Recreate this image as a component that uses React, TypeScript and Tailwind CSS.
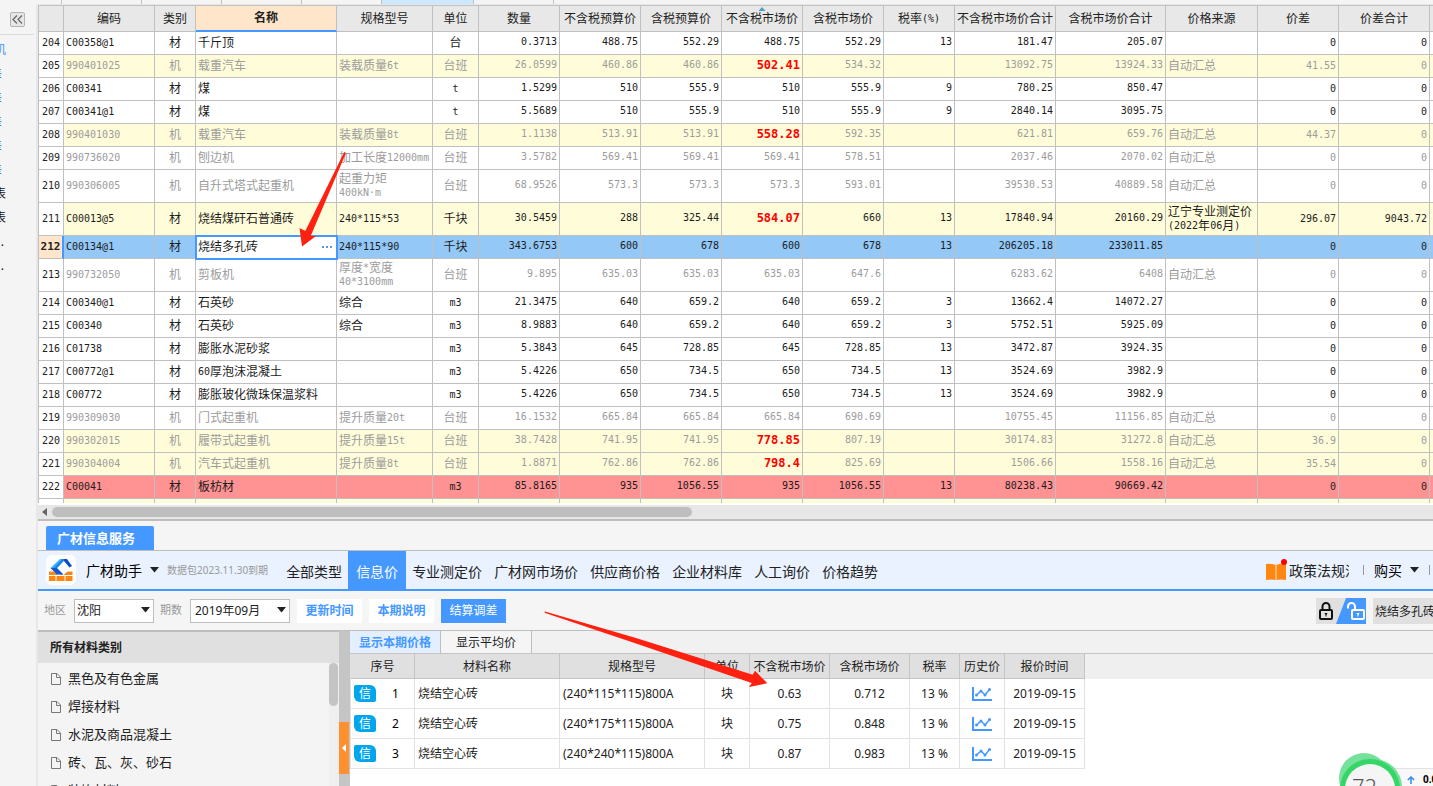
import { useState } from 'react'
import clsx from 'clsx'

interface Material {
    no: number;
    code: string;
    kind: string;
    name: string;
    spec: string;
    unit: string;
    values: string[]; // qty, budget, budget+tax, market, market+tax, rate, total, total+tax
    source: string;
    diff: string;
    diffTotal: string;
}

const row = (no: number, code: string, kind: string, name: string, spec: string, unit: string, values: string, source = '', diff = '0', diffTotal = '0'): Material => ({
    no, code, kind, name, spec, unit, values: values.split('|'), source, diff, diffTotal,
});

const MATERIALS: Material[] = [
    row(204, 'C00358@1', '材', '千斤顶', '', '台', '0.3713|488.75|552.29|488.75|552.29|13|181.47|205.07'),
    row(205, '990401025', '机', '载重汽车', '装载质量6t', '台班', '26.0599|460.86|460.86|502.41|534.32||13092.75|13924.33', '自动汇总', '41.55'),
    row(206, 'C00341', '材', '煤', '', 't', '1.5299|510|555.9|510|555.9|9|780.25|850.47'),
    row(207, 'C00341@1', '材', '煤', '', 't', '5.5689|510|555.9|510|555.9|9|2840.14|3095.75'),
    row(208, '990401030', '机', '载重汽车', '装载质量8t', '台班', '1.1138|513.91|513.91|558.28|592.35||621.81|659.76', '自动汇总', '44.37'),
    row(209, '990736020', '机', '刨边机', '加工长度12000mm', '台班', '3.5782|569.41|569.41|569.41|578.51||2037.46|2070.02', '自动汇总'),
    row(210, '990306005', '机', '自升式塔式起重机', '起重力矩\n400kN·m', '台班', '68.9526|573.3|573.3|573.3|593.01||39530.53|40889.58', '自动汇总'),
    row(211, 'C00013@5', '材', '烧结煤矸石普通砖', '240*115*53', '千块', '30.5459|288|325.44|584.07|660|13|17840.94|20160.29', '辽宁专业测定价\n(2022年06月)', '296.07', '9043.72'),
    row(212, 'C00134@1', '材', '烧结多孔砖', '240*115*90', '千块', '343.6753|600|678|600|678|13|206205.18|233011.85'),
    row(213, '990732050', '机', '剪板机', '厚度*宽度\n40*3100mm', '台班', '9.895|635.03|635.03|635.03|647.6||6283.62|6408', '自动汇总'),
    row(214, 'C00340@1', '材', '石英砂', '综合', 'm3', '21.3475|640|659.2|640|659.2|3|13662.4|14072.27'),
    row(215, 'C00340', '材', '石英砂', '综合', 'm3', '8.9883|640|659.2|640|659.2|3|5752.51|5925.09'),
    row(216, 'C01738', '材', '膨胀水泥砂浆', '', 'm3', '5.3843|645|728.85|645|728.85|13|3472.87|3924.35'),
    row(217, 'C00772@1', '材', '60厚泡沫混凝土', '', 'm3', '5.4226|650|734.5|650|734.5|13|3524.69|3982.9'),
    row(218, 'C00772', '材', '膨胀玻化微珠保温浆料', '', 'm3', '5.4226|650|734.5|650|734.5|13|3524.69|3982.9'),
    row(219, '990309030', '机', '门式起重机', '提升质量20t', '台班', '16.1532|665.84|665.84|665.84|690.69||10755.45|11156.85', '自动汇总'),
    row(220, '990302015', '机', '履带式起重机', '提升质量15t', '台班', '38.7428|741.95|741.95|778.85|807.19||30174.83|31272.8', '自动汇总', '36.9'),
    row(221, '990304004', '机', '汽车式起重机', '提升质量8t', '台班', '1.8871|762.86|762.86|798.4|825.69||1506.66|1558.16', '自动汇总', '35.54'),
    row(222, 'C00041', '材', '板枋材', '', 'm3', '85.8165|935|1056.55|935|1056.55|13|80238.43|90669.42'),
]

const COLUMNS = [
    { title: '', width: 'w-[26px]' },
    { title: '编码', width: 'w-[91px]' },
    { title: '类别', width: 'w-[41px]' },
    { title: '名称', width: 'w-[141px]' },
    { title: '规格型号', width: 'w-[96px]' },
    { title: '单位', width: 'w-[46px]' },
    { title: '数量', width: 'w-[81px]' },
    { title: '不含税预算价', width: 'w-[81px]' },
    { title: '含税预算价', width: 'w-[81px]' },
    { title: '不含税市场价', width: 'w-[81px]' },
    { title: '含税市场价', width: 'w-[81px]' },
    { title: '税率(%)', width: 'w-[71px]' },
    { title: '不含税市场价合计', width: 'w-[101px]' },
    { title: '含税市场价合计', width: 'w-[110px]' },
    { title: '价格来源', width: 'w-[92px]' },
    { title: '价差', width: 'w-[81px]' },
    { title: '价差合计', width: 'w-[91px]' },
]

const NAV = ['全部类型', '信息价', '专业测定价', '广材网市场价', '供应商价格', '企业材料库', '人工询价', '价格趋势']
const CATEGORIES = ['黑色及有色金属', '焊接材料', '水泥及商品混凝土', '砖、瓦、灰、砂石', '装饰材料']

const PRICE_COLUMNS = [
    { title: '序号', width: 'w-[64px]' },
    { title: '材料名称', width: 'w-[145px]' },
    { title: '规格型号', width: 'w-[145px]' },
    { title: '单位', width: 'w-[45px]' },
    { title: '不含税市场价', width: 'w-[80px]' },
    { title: '含税市场价', width: 'w-[80px]' },
    { title: '税率', width: 'w-[50px]' },
    { title: '历史价', width: 'w-[45px]' },
    { title: '报价时间', width: 'w-[80px]' },
]

const PRICES = [
    { spec: '(240*115*115)800A', price: '0.63', taxed: '0.712' },
    { spec: '(240*175*115)800A', price: '0.75', taxed: '0.848' },
    { spec: '(240*240*115)800A', price: '0.87', taxed: '0.983' },
]

// Half-width characters are set in a smaller mono face so that two of them fill one full-width cell
function Mixed({ text }: { text: string }) {
    return (
        <>
            {text.split(/([\x20-\x7e·]+)/).map((part, i) =>
                i % 2 === 1 ? <span key={i} className="align-[1px] font-['DejaVu_Sans_Mono','Noto_Sans_CJK_SC',monospace] text-[10px] leading-none">{part}</span> : part
            )}
        </>
    )
}

function Caret() {
    return (
        <svg width="9" height="6" viewBox="0 0 9 6" className="shrink-0 pointer-events-none">
            <path d="M0 0h9L4.5 5.5z" fill="#222" />
        </svg>
    )
}

function MaterialRow({ item }: { item: Material }) {
    const [name, setName] = useState(item.name)
    const selected = item.no === 212
    const changed = item.diff !== '0'
    const cell = 'border-r border-b border-[#c0c0c0] px-0.5'

    return (
        <tr
            className={clsx(
                item.spec.includes('\n') || item.source.includes('\n') ? 'h-[33px]' : 'h-[23px]',
                item.kind === '机' ? 'text-[#9c9c9c]' : 'text-[#1c1c1c]',
                changed && 'bg-[#fffcd9]',
                selected && 'bg-[#93c8f7]',
                item.no === 222 && 'bg-[#ff9393]',
            )}
        >
            <th
                scope="row"
                className={clsx(
                    "border-b border-l border-[#c0c0c0] p-0 text-center font-['DejaVu_Sans_Mono',monospace] text-[#222]",
                    selected ? 'border-r-2 border-r-[#4498ff] bg-[#ffe6ca] text-[11px] font-bold' : 'border-r bg-white text-[10px] font-normal',
                )}
            >
                {item.no}
            </th>
            <td className={clsx(cell, 'py-0')}><Mixed text={item.code} /></td>
            <td className={clsx(cell, 'py-0 text-center')}>{item.kind}</td>
            {selected ? (
                <td className="relative z-10 border-r border-b border-[#4498ff] bg-white px-0.5 py-0 outline-2 -outline-offset-1 outline-[#4498ff]">
                    <div className="flex items-center">
                        <input aria-label="名称" value={name} onChange={(e) => setName(e.target.value)} className="min-w-0 flex-1 bg-transparent outline-none" />
                        <button aria-label="选择材料" className="mr-0.5 flex gap-0.5">
                            <i className="size-0.5 bg-[#5b9bd5]" />
                            <i className="size-0.5 bg-[#5b9bd5]" />
                            <i className="size-0.5 bg-[#5b9bd5]" />
                        </button>
                    </div>
                </td>
            ) : (
                <td className={clsx(cell, 'py-0')}><Mixed text={item.name} /></td>
            )}
            <td className={clsx(cell, 'py-0 whitespace-pre')}><Mixed text={item.spec} /></td>
            <td className={clsx(cell, 'py-0 text-center')}><Mixed text={item.unit} /></td>
            {item.values.map((value, i) => (
                <td
                    key={i}
                    className={clsx(
                        cell,
                        "pt-0 pb-0.5 text-right font-['DejaVu_Sans_Mono',monospace]",
                        changed && i === 3 ? 'text-[12px] font-bold text-[#ff0000]' : 'text-[10px]',
                    )}
                >
                    {value}
                </td>
            ))}
            <td className={clsx(cell, 'py-0 whitespace-pre')}><Mixed text={item.source} /></td>
            <td className={clsx(cell, 'py-0 text-right')}><Mixed text={item.diff} /></td>
            <td className={clsx(cell, 'py-0 text-right')}><Mixed text={item.diffTotal} /></td>
            <td className="border-b border-[#c0c0c0] p-0" />
        </tr>
    )
}

function MaterialTable() {
    return (
        <div className="overflow-hidden bg-white pb-0.5">
            <table className="w-full table-fixed border-separate border-spacing-0 text-[12px] leading-[14px]">
                <thead>
                    <tr className="h-[27px] bg-[#e8e8e8] text-[#222]">
                        {COLUMNS.map((column, i) => (
                            <th
                                key={i}
                                className={clsx(
                                    column.width,
                                    'relative border-t border-r border-[#c0c0c0] p-0 text-center whitespace-nowrap',
                                    i === 0 && 'border-l',
                                    column.title === '名称' ? 'border-b-2 border-b-[#4498ff] bg-[#ffe6ca] font-bold' : 'border-b font-normal',
                                )}
                            >
                                <Mixed text={column.title} />
                                {column.title === '不含税市场价' && (
                                    <svg width="7" height="4" viewBox="0 0 7 4" className="absolute top-px left-1/2 -translate-x-1/2">
                                        <path d="M3.5 0L7 4H0z" fill="#4f9cc4" />
                                    </svg>
                                )}
                            </th>
                        ))}
                        <th className="border-t border-b border-[#c0c0c0] p-0" />
                    </tr>
                </thead>
                <tbody>
                    {MATERIALS.map((item) => <MaterialRow key={item.no} item={item} />)}
                    <tr className="h-1 bg-[#fffcd9]">
                        {COLUMNS.map((_, i) => (
                            <td key={i} className={clsx('border-r border-[#c0c0c0] p-0', i === 0 && 'border-l bg-white')} />
                        ))}
                        <td className="p-0" />
                    </tr>
                </tbody>
            </table>
        </div>
    )
}

function Sidebar() {
    return (
        <aside className="flex w-[38px] shrink-0 flex-col border-r-2 border-[#e8e8e8] bg-[#f4f4f4] text-[12px]">
            <div className="mr-0.5 flex h-[31px] items-center justify-center border-b border-[#dcdcdc]">
                <button aria-label="收起" className="flex size-[15px] items-center justify-center rounded-xs border border-[#b4b4b4] bg-[#e6e6e6]">
                    <svg width="11" height="9" viewBox="0 0 11 9" fill="none" stroke="#666" strokeWidth="1.2">
                        <path d="M5 .5l-4 4 4 4M10 .5l-4 4 4 4" />
                    </svg>
                </button>
            </div>
            <ul className="mt-[3px] leading-6">
                <li className="flex w-1.5 justify-end overflow-hidden text-[#4498ff]">机</li>
                {[1, 2, 3, 4, 5].map((n) => (
                    <li key={n} className="flex w-0.5 justify-end overflow-hidden text-[#1f6f9f]">差</li>
                ))}
                <li className="flex w-1.5 justify-end overflow-hidden text-[#111]">表</li>
                <li className="flex w-1.5 justify-end overflow-hidden text-[#111]">表</li>
                <li className="flex w-1 justify-end overflow-hidden text-[#111]">.</li>
                <li className="flex w-1 justify-end overflow-hidden text-[#111]">.</li>
            </ul>
        </aside>
    )
}

function Logo() {
    return (
        <div className="flex size-[30px] items-center justify-center rounded-md bg-white">
            <svg width="24" height="24" viewBox="0 0 24 24">
                <path d="M0 13.5h6l3 3.5H0zM23.5 13.5h-5l-4 3.500h9zM0 18h6.500v5H0zM7.500 18h8v5h-8zM16.500 18h7v5h-7zM10 17l2-1.500 2 1.500z" fill="#ff8610" />
                <path d="M11 1h5.500L8 10H1.500z" fill="#35b4fb" />
                <path d="M13.500 1h3L8 10H5z" fill="#1d7df2" />
                <path d="M1.500 10H8l6.500 6.500H8z" fill="#1259cf" />
                <path d="M15 1h3l5 7-2.500 1.500L15 3z" fill="#0d4fc0" />
            </svg>
        </div>
    )
}

function ServiceHeader() {
    const [active, setActive] = useState('信息价')
    return (
        <header className="flex h-10 items-stretch border-b-2 border-[#4498ff] bg-[#eaf2ff] pl-2 text-[14px] whitespace-nowrap text-[#222]">
            <div className="flex shrink-0 items-center">
                <Logo />
                <button className="ml-2.5 flex items-center gap-2 text-black">广材助手<Caret /></button>
                <span className="mr-3 ml-2 text-[10px] text-[#999]">数据包2023.11.30到期</span>
            </div>
            <nav className="flex shrink-0">
                {NAV.map((label) => (
                    <button
                        key={label}
                        onClick={() => setActive(label)}
                        className={clsx('pt-0.5', label === active ? 'bg-[#4498ff] px-2 text-white' : 'px-1.5')}
                    >
                        {label}
                    </button>
                ))}
            </nav>
            <div className="ml-auto flex shrink-0 items-center">
                <a href="#policy" className="flex w-[83px] items-center gap-0.5 overflow-hidden">
                    <svg width="21" height="24" viewBox="0 0 21 24" className="shrink-0">
                        <path d="M0 6q5-1 10 1 5-2 10-1v16q-5-1-10 0-5-1-10 0z" fill="#ff8610" />
                        <path d="M10 7v15" stroke="#ffc68a" strokeWidth="1.5" />
                        <circle cx="18" cy="4" r="3" fill="#f00" />
                    </svg>
                    政策法规汇
                </a>
                <i className="mr-2.5 ml-3.5 h-2.5 w-px bg-[#999]" />
                <button className="flex items-center gap-2 text-black">购买<Caret /></button>
                <i className="mr-[3px] ml-2.5 h-2.5 w-px bg-[#999]" />
            </div>
        </header>
    )
}

function Toolbar() {
    return (
        <div className="flex h-10 items-center border-b border-[#bebebe] bg-[#f5f5f5] pl-1.5 text-[12px] whitespace-nowrap text-[#222]">
            <label htmlFor="region" className="text-[11px] text-[#999]">地区</label>
            <div className="relative ml-2 w-20">
                <select id="region" className="h-6 w-full appearance-none border border-[#bebebe] bg-white px-0.5">
                    <option>沈阳</option>
                </select>
                <span className="pointer-events-none absolute top-2 right-1"><Caret /></span>
            </div>
            <label htmlFor="period" className="ml-1.5 text-[11px] text-[#999]">期数</label>
            <div className="relative ml-2 w-[100px]">
                <select id="period" className="h-6 w-full appearance-none border border-[#bebebe] bg-white px-1">
                    <option>2019年09月</option>
                </select>
                <span className="pointer-events-none absolute top-2 right-1"><Caret /></span>
            </div>
            <button className="ml-[7px] h-6 w-[65px] bg-white font-bold text-[#4498ff]">更新时间</button>
            <button className="ml-[7px] h-6 w-[65px] bg-white font-bold text-[#4498ff]">本期说明</button>
            <button className="ml-[7px] h-6 w-[65px] bg-[#4498ff] text-white">结算调差</button>
            <div className="ml-auto flex shrink-0 items-center gap-[7px]">
                <button aria-label="锁定切换">
                    <svg width="50" height="26" viewBox="0 0 50 26" fill="none">
                        <path d="M0 0h30l-9 26H0z" fill="#e0e0e0" />
                        <path d="M30 0h20v26H20z" fill="#4498ff" />
                        <rect x="4" y="12" width="12" height="9" rx="1" stroke="#111" strokeWidth="2" />
                        <path d="M6.5 12V8.500a3.500 3.500 0 0 1 7 0V12" stroke="#111" strokeWidth="2" />
                        <path d="M8.500 15h3l-1 2v1.500h-1V17z" fill="#111" />
                        <rect x="36" y="12" width="12" height="9" rx="1" stroke="#fff" strokeWidth="2" />
                        <path d="M32 10.500V8.500a3.500 3.500 0 0 1 7 0V12" stroke="#fff" strokeWidth="2" />
                        <path d="M40.500 15h3l-1 2v1.500h-1V17z" fill="#fff" />
                    </svg>
                </button>
                <input aria-label="搜索材料" defaultValue="烧结多孔砖" className="h-[26px] w-[60px] bg-[#e0e0e0] pl-0.5 outline-none" />
            </div>
        </div>
    )
}

function CategoryPanel() {
    return (
        <section className="flex w-[301px] shrink-0 flex-col bg-[#f4f4f4]">
            <h2 className="h-8 shrink-0 border-t border-[#bebebe] bg-[#e0e0e0] pl-3 text-[12px] leading-8 font-bold text-[#222]">所有材料类别</h2>
            <div className="flex min-h-0 flex-1">
                <ul className="flex-1 pt-0.5 pl-3 text-[13px] text-[#222]">
                    {CATEGORIES.map((category) => (
                        <li key={category} className="flex h-7 items-center gap-[7px]">
                            <svg width="11" height="12" viewBox="0 0 11 12" fill="none" stroke="#777">
                                <path d="M1.500.500h5.500l3.500 3.500v7.500h-9zM6.500.500v4h4" />
                            </svg>
                            {category}
                        </li>
                    ))}
                </ul>
                <div className="w-2.5 bg-[#efefef]">
                    <div className="h-[43px] w-[9px] rounded-full bg-[#c4c4c4]" />
                </div>
            </div>
        </section>
    )
}

function PricePanel() {
    const cell = 'border-r border-b border-[#e2e2e2] px-[3px] py-0'
    return (
        <section className="min-w-0 flex-1 bg-white text-[12px] text-[#222]">
            <div className="flex h-[23px] items-stretch border-b border-[#c4c4c4] bg-[#f1f1f1]">
                <button className="w-[91px] border-r border-[#bebebe] bg-[#e3efff] pt-0.5 font-bold text-[#4498ff]">显示本期价格</button>
                <button className="w-[91px] border-r border-[#bebebe] bg-[#f5f5f5] pt-0.5">显示平均价</button>
            </div>
            <div className="bg-[linear-gradient(#efefef_25px,white_25px)]">
                <table className="w-[735px] table-fixed border-separate border-spacing-0 border-l border-[#e2e2e2]">
                    <thead>
                        <tr className="h-[25px] bg-[#e0e0e0]">
                            {PRICE_COLUMNS.map((column) => (
                                <th key={column.title} className={clsx(column.width, 'border-r border-b border-[#c4c4c4] px-0 pt-0.5 pb-0 font-normal whitespace-nowrap')}>
                                    {column.title}
                                </th>
                            ))}
                        </tr>
                    </thead>
                    <tbody className="bg-white text-center">
                        {PRICES.map((item, i) => (
                            <tr key={item.spec} className="h-[30px]">
                                <td className={cell}>
                                    <div className="flex items-center">
                                        <span className="h-[17px] w-[22px] rounded-tl-xs rounded-tr-md rounded-br-xs rounded-bl-md bg-[#00a5ee] leading-[17px] text-white">信</span>
                                        <span className="flex-1 pr-3 pl-4 text-black">{i + 1}</span>
                                    </div>
                                </td>
                                <td className={clsx(cell, 'text-left')}>烧结空心砖</td>
                                <td className={clsx(cell, 'text-left')}>{item.spec}</td>
                                <td className={cell}>块</td>
                                <td className={cell}>{item.price}</td>
                                <td className={cell}>{item.taxed}</td>
                                <td className={cell}>13 %</td>
                                <td className={cell}>
                                    <button aria-label="历史价" className="block w-full">
                                        <svg width="20" height="14" viewBox="0 0 20 14" fill="none" stroke="#4498ff" className="mx-auto">
                                            <path d="M1 0v13h19" strokeWidth="2" />
                                            <path d="M4.500 8L9 4l4 4 5-6" strokeWidth="1.500" />
                                            <g fill="#4498ff" stroke="none">
                                                <circle cx="4.500" cy="8" r="1.500" />
                                                <circle cx="9" cy="4" r="1.500" />
                                                <circle cx="13" cy="8" r="1.500" />
                                                <circle cx="17.500" cy="2.500" r="1.500" />
                                            </g>
                                        </svg>
                                    </button>
                                </td>
                                <td className={cell}>2019-09-15</td>
                            </tr>
                        ))}
                    </tbody>
                </table>
            </div>
        </section>
    )
}

function SpeedWidget() {
    return (
        <div className="absolute right-0 bottom-0 h-[34px] w-[95px] overflow-hidden">
            <div className="absolute right-0 bottom-0 flex h-[18px] w-11 items-center justify-end gap-2 border-t border-[#e2e2e2] bg-[#f8f8f8] pt-1">
                <svg width="8" height="8" viewBox="0 0 8 8" fill="none" stroke="#2f8cf5" strokeWidth="1.500">
                    <path d="M4 8V1M.800 4L4 1l3.200 3" />
                </svg>
                <span className="w-2.5 overflow-hidden text-[10px] font-bold whitespace-nowrap text-black">0.0K/s</span>
            </div>
            <svg width="66" height="34" viewBox="0 0 66 34" className="absolute bottom-0 left-0">
                <circle cx="26" cy="26" r="25" fill="#76e19a" />
                <circle cx="36" cy="35" r="28" fill="#76e19a" />
                <circle cx="32" cy="37" r="30" fill="#35d568" />
                <circle cx="32" cy="37" r="25" fill="#f5f5f5" />
            </svg>
            <span className="absolute top-[22px] left-[14px] text-[22px] leading-6 font-light text-[#555]">72</span>
        </div>
    )
}

export default function App() {
    return (
        <div className="relative flex h-screen flex-col overflow-hidden bg-[#f5f5f5] font-['Noto_Sans','Noto_Sans_CJK_SC',sans-serif]">
            <div className="flex h-1 shrink-0 bg-[#f4f4f4]">
                <i className="w-[62px] border-r border-[#c0c0c0]" />
                <i className="w-20 border-r border-[#c0c0c0]" />
                <i className="w-20 border-r border-[#c0c0c0]" />
                <i className="w-20 border-r border-[#c0c0c0]" />
                <i className="w-20 border-r border-[#c0c0c0]" />
                <i className="w-[92px] border-r border-[#c0c0c0] bg-[#cce8ff]" />
                <i className="w-20 border-r border-[#c0c0c0]" />
            </div>
            <div className="flex min-h-0 flex-1">
                <Sidebar />
                <main className="flex min-w-0 flex-1 flex-col border-t border-[#e8e8e8]">
                    <MaterialTable />
                    <div className="flex h-4 shrink-0 items-center gap-[5px] border-b-2 border-[#bebebe] bg-[#e7e7e7] pl-1">
                        <svg width="5" height="8" viewBox="0 0 5 8"><path d="M5 0v8L0 4z" fill="#666" /></svg>
                        <div className="h-2.5 w-[46%] rounded-full bg-[#bebebe]" />
                    </div>
                    <div className="flex h-[30px] shrink-0 items-end border-b border-[#bebebe] pl-2">
                        <button className="h-6 w-[108px] rounded-t-xs bg-[#4498ff] pt-0.5 pl-[11px] text-left text-[13px] font-bold text-white">广材信息服务</button>
                    </div>
                    <ServiceHeader />
                    <Toolbar />
                    <div className="flex min-h-0 flex-1 overflow-hidden">
                        <CategoryPanel />
                        <div className="flex w-[11px] shrink-0 flex-col bg-[#c5c5c5]">
                            <button aria-label="折叠" className="mt-[91px] flex h-[52px] w-2.5 shrink-0 items-center justify-center bg-[#ff9030]">
                                <svg width="4" height="8" viewBox="0 0 4 8"><path d="M4 0v8L0 4z" fill="#fff" /></svg>
                            </button>
                        </div>
                        <PricePanel />
                    </div>
                </main>
            </div>
            <SpeedWidget />
            <svg width="480" height="540" viewBox="0 0 480 540" className="pointer-events-none absolute top-[150px] left-[296px] z-20" fill="#ff2010">
                <path d="M48.300 2L50 3 14.700 86 20 86 6 96.500 3.500 78 9.300 81z" />
                <path d="M249 461.500L340 488 456.700 524.700 459 520.700 471.300 533.300 453 537 455.700 533 340 493.500 248.500 462.800z" />
            </svg>
        </div>
    )
}
